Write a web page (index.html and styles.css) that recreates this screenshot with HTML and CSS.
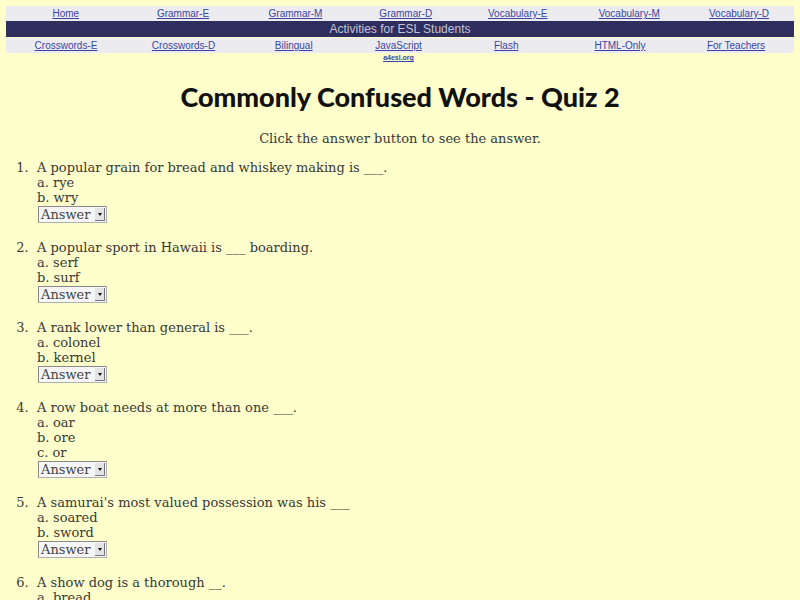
FILE: index.html
```html
<!DOCTYPE html>
<html>
<head>
<meta charset="utf-8">
<title>Commonly Confused Words - Quiz 2</title>
<link rel="stylesheet" href="styles.css">
</head>
<body>
<div class="nav">
  <div class="navrow row-top">
    <a href="#">Home</a><a href="#">Grammar-E</a><a href="#">Grammar-M</a><a href="#">Grammar-D</a><a href="#">Vocabulary-E</a><a href="#">Vocabulary-M</a><a href="#">Vocabulary-D</a>
  </div>
  <div class="navbar">Activities for ESL Students</div>
  <div class="navrow row-bottom">
    <a href="#">Crosswords-E</a><a href="#">Crosswords-D</a><a href="#">Bilingual</a><a href="#">JavaScript</a><a href="#">Flash</a><a href="#">HTML-Only</a><a href="#">For Teachers</a>
  </div>
  <div class="site"><a href="#">a4esl.org</a></div>
</div>

<h1 class="title">Commonly Confused Words - Quiz 2</h1>
<p class="intro">Click the answer button to see the answer.</p>

<ol class="quiz">
  <li>
    <div class="q">A popular grain for bread and whiskey making is ___.</div>
    <div class="opt">a. rye</div>
    <div class="opt">b. wry</div>
    <span class="answer"><span class="answer-label">Answer</span><span class="answer-arrow"></span></span>
  </li>
  <li>
    <div class="q">A popular sport in Hawaii is ___ boarding.</div>
    <div class="opt">a. serf</div>
    <div class="opt">b. surf</div>
    <span class="answer"><span class="answer-label">Answer</span><span class="answer-arrow"></span></span>
  </li>
  <li>
    <div class="q">A rank lower than general is ___.</div>
    <div class="opt">a. colonel</div>
    <div class="opt">b. kernel</div>
    <span class="answer"><span class="answer-label">Answer</span><span class="answer-arrow"></span></span>
  </li>
  <li>
    <div class="q">A row boat needs at more than one ___.</div>
    <div class="opt">a. oar</div>
    <div class="opt">b. ore</div>
    <div class="opt">c. or</div>
    <span class="answer"><span class="answer-label">Answer</span><span class="answer-arrow"></span></span>
  </li>
  <li>
    <div class="q">A samurai's most valued possession was his ___</div>
    <div class="opt">a. soared</div>
    <div class="opt">b. sword</div>
    <span class="answer"><span class="answer-label">Answer</span><span class="answer-arrow"></span></span>
  </li>
  <li>
    <div class="q">A show dog is a thorough __.</div>
    <div class="opt">a. bread</div>
    <div class="opt">b. bred</div>
    <span class="answer"><span class="answer-label">Answer</span><span class="answer-arrow"></span></span>
  </li>
</ol>
</body>
</html>
```
FILE: styles.css
```css
html, body {
  background: #ffffcc;
}
body {
  margin: 6px;
  font-family: "DejaVu Serif", "Liberation Serif", serif;
  font-size: 13px;
  color: #383838;
}
.nav {
  font-family: "Liberation Sans", Arial, sans-serif;
}
.navrow {
  display: grid;
  height: 15px;
  background: #ececf0;
  align-items: center;
  font-size: 10px;
  line-height: 15px;
}
.row-top {
  grid-template-columns: 119.5px 115px 110px 110.5px 113.5px 109.5px 110px;
}
.row-bottom {
  grid-template-columns: 120px 115px 105.5px 104px 111.5px 116px 116px;
  margin-top: 1px;
}
.navrow a {
  text-align: center;
  color: #3a44a0;
  text-decoration: underline;
}
.navbar {
  height: 16px;
  background: #2e2e5e;
  color: #c4c4d8;
  text-align: center;
  font-size: 12px;
  line-height: 16px;
}
.site {
  font-size: 7px;
  line-height: 10px;
  font-weight: bold;
  display: grid;
  grid-template-columns: 340.5px 104px;
  text-align: center;
}
.site a {
  grid-column: 2;
  color: #3a44a0;
}
.title {
  margin: 16px 0 0;
  text-align: center;
  font-family: Lato, "DejaVu Sans", sans-serif;
  font-weight: 900;
  font-size: 27px;
  line-height: 36px;
  color: #111;
}
.intro {
  margin: 16px 0 0;
  text-align: center;
  line-height: 16px;
}
.quiz {
  margin: 13px 0 0;
  padding-left: 31px;
  line-height: 15px;
}
.quiz li {
  margin-bottom: 17px;
}
.quiz li::marker {
  content: counter(list-item) ".\00a0\00a0";
}
.answer {
  display: inline-flex;
  align-items: center;
  margin: 1px 0 0 1px;
  height: 15px;
  width: 67px;
  border: 1px solid #8a8a8a;
  border-right-color: #b0b0b0;
  border-bottom-color: #b0b0b0;
  background: #f6f6f6;
  vertical-align: top;
}
.answer-label {
  flex: 1;
  padding-left: 2px;
  font-size: 13px;
  line-height: 15px;
  color: #444;
}
.answer-arrow {
  width: 9px;
  height: 12px;
  margin-right: 1px;
  background: #e4e4e4;
  border-right: 1px solid #777;
  border-bottom: 1px solid #777;
  display: flex;
  align-items: center;
  justify-content: center;
}
.answer-arrow::before {
  content: "";
  border-left: 2.5px solid transparent;
  border-right: 2.5px solid transparent;
  border-top: 3px solid #111;
}
```
